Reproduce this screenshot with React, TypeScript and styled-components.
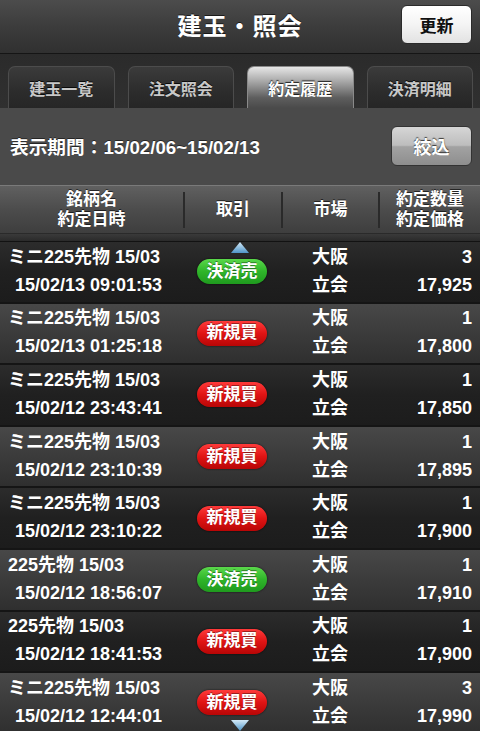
import React from 'react';
import styled, { createGlobalStyle, css } from 'styled-components';

const GlobalStyle = createGlobalStyle`
  html, body {
    margin: 0;
    padding: 0;
    background: #1e1e1e;
  }
  * {
    box-sizing: border-box;
  }
`;

const FONT = `"Liberation Sans", "Noto Sans CJK JP", sans-serif`;

const Screen = styled.div`
  width: 480px;
  height: 731px;
  overflow: hidden;
  display: flex;
  flex-direction: column;
  font-family: ${FONT};
  font-weight: bold;
  color: #fff;
  background: #1e1e1e;
  position: relative;
`;

// top navigation bar
const NavBar = styled.header`
  height: 54px;
  flex: none;
  display: grid;
  grid-template-columns: 1fr auto 1fr;
  align-items: center;
  padding: 0 8px;
  background: linear-gradient(#4c4c4c, #3c3c3c 50%, #303030);
  border-bottom: 1px solid #151515;
`;

const Title = styled.h1`
  grid-column: 2;
  margin: 0;
  font-size: 24px;
  font-weight: bold;
  color: #fff;
  letter-spacing: 1px;
  text-shadow: 0 -1px 0 rgba(0, 0, 0, 0.6);
  padding-bottom: 4px;
`;

const UpdateButton = styled.button`
  justify-self: end;
  width: 71px;
  height: 39px;
  margin-bottom: 4px;
  border: 1px solid #2a2a2a;
  border-radius: 6px;
  background: linear-gradient(#ffffff, #f4f4f4 50%, #e2e2e2);
  color: #111;
  font-family: ${FONT};
  font-size: 17px;
  font-weight: bold;
  padding: 0;
`;

// tabs
const TabBar = styled.nav`
  height: 54px;
  flex: none;
  display: flex;
  align-items: flex-end;
  gap: 13px;
  padding: 0 7px 0 8px;
  background: linear-gradient(#2b2b2b, #303030);
`;

const Tab = styled.div<{ $active?: boolean }>`
  flex: 1;
  height: 42px;
  display: flex;
  align-items: center;
  justify-content: center;
  border-radius: 7px 7px 0 0;
  font-size: 16px;
  ${p =>
    p.$active
      ? css`
          background: linear-gradient(#e6e6e6, #a8a8a8 35%, #5e5e5e 75%, #4a4a4a);
          color: #fff;
          text-shadow: 0 -1px 1px rgba(0, 0, 0, 0.8);
          border: 1px solid #8a8a8a;
          border-bottom: none;
        `
      : css`
          background: linear-gradient(#3b3b3b, #2c2c2c 60%, #262626);
          color: #c8c8c8;
          border: 1px solid #4c4c4c;
          border-bottom: none;
          text-shadow: 0 -1px 0 rgba(0, 0, 0, 0.8);
        `}
`;

// filter row
const FilterBar = styled.div`
  height: 77px;
  flex: none;
  display: flex;
  align-items: center;
  justify-content: space-between;
  padding: 0 8px 0 10px;
  background: #4a4a4a;
`;

const Period = styled.div`
  font-size: 18.7px;
  color: #fff;
  text-shadow: 0 -1px 0 rgba(0, 0, 0, 0.5);
  padding-bottom: 3px;
`;

const FilterButton = styled.button`
  width: 81px;
  height: 40px;
  margin-bottom: 2px;
  border: 1px solid #333;
  border-radius: 6px;
  background: linear-gradient(#d6d6d6, #bdbdbd 48%, #a2a2a2 52%, #8e8e8e);
  color: #fff;
  font-family: ${FONT};
  font-size: 18px;
  font-weight: bold;
  text-shadow: 0 -1px 1px rgba(0, 0, 0, 0.7);
  padding: 0;
`;

// table
const COLUMNS = '183px 98px 97px 1fr';

const HeaderRow = styled.div`
  height: 49px;
  flex: none;
  display: grid;
  grid-template-columns: ${COLUMNS};
  align-items: center;
  background: linear-gradient(#606060, #4c4c4c 50%, #3e3e3e);
  border-top: 1px solid #7a7a7a;
  border-bottom: 1px solid #2a2a2a;
`;

const HeaderCell = styled.div<{ $divider?: boolean }>`
  height: 36px;
  display: flex;
  flex-direction: column;
  align-items: center;
  justify-content: center;
  font-size: 17px;
  line-height: 20px;
  color: #fff;
  text-shadow: 0 -1px 0 rgba(0, 0, 0, 0.6);
  border-left: ${p => (p.$divider ? '2px solid #2a2a2a' : 'none')};
`;

const HeaderGap = styled.div`
  height: 8px;
  flex: none;
  background: linear-gradient(#3a3a3a, #2a2a2a);
  border-bottom: 1px solid #121212;
`;

const List = styled.div`
  flex: 1;
  position: relative;
  overflow: hidden;
`;

const Row = styled.div<{ $dark: boolean }>`
  height: 61.6px;
  display: grid;
  grid-template-columns: ${COLUMNS};
  align-items: center;
  border-bottom: 2px solid #151515;
  background: ${p =>
    p.$dark
      ? 'linear-gradient(#2c2c2c, #202020 50%, #1c1c1c)'
      : 'linear-gradient(#484848, #3b3b3b 50%, #2f2f2f)'};
  font-size: 18px;
  line-height: 28px;
`;

const NameCell = styled.div`
  padding: 0 0 2px 8px;
  white-space: nowrap;
`;

const DateLine = styled.div`
  padding-left: 7px;
`;

const Center = styled.div`
  display: flex;
  justify-content: center;
`;

const Badge = styled.span<{ $kind: 'sell' | 'buy' }>`
  width: 70px;
  height: 25px;
  border-radius: 12.5px;
  display: flex;
  align-items: center;
  justify-content: center;
  font-size: 17px;
  color: #fff;
  text-shadow: 0 -1px 0 rgba(0, 0, 0, 0.4);
  background: ${p =>
    p.$kind === 'sell'
      ? 'linear-gradient(#5ad84a, #2fb52a 50%, #1f9a1e)'
      : 'linear-gradient(#ff3a3a, #e01414 50%, #b80606)'};
  box-shadow: 0 0 2px rgba(0, 0, 0, 0.8);
`;

const MarketCell = styled.div`
  padding: 0 0 2px 31px;
`;

const QtyCell = styled.div`
  padding: 0 8px 2px 0;
  text-align: right;
`;

const Arrow = styled.svg<{ $down?: boolean }>`
  position: absolute;
  left: 231px;
  width: 18px;
  height: 11px;
  ${p => (p.$down ? 'bottom: 0;' : 'top: 0;')}
`;

type Trade = {
  name: string;
  date: string;
  kind: 'sell' | 'buy';
  qty: string;
  price: string;
};

const trades: Trade[] = [
  { name: 'ミニ225先物 15/03', date: '15/02/13 09:01:53', kind: 'sell', qty: '3', price: '17,925' },
  { name: 'ミニ225先物 15/03', date: '15/02/13 01:25:18', kind: 'buy', qty: '1', price: '17,800' },
  { name: 'ミニ225先物 15/03', date: '15/02/12 23:43:41', kind: 'buy', qty: '1', price: '17,850' },
  { name: 'ミニ225先物 15/03', date: '15/02/12 23:10:39', kind: 'buy', qty: '1', price: '17,895' },
  { name: 'ミニ225先物 15/03', date: '15/02/12 23:10:22', kind: 'buy', qty: '1', price: '17,900' },
  { name: '225先物 15/03', date: '15/02/12 18:56:07', kind: 'sell', qty: '1', price: '17,910' },
  { name: '225先物 15/03', date: '15/02/12 18:41:53', kind: 'buy', qty: '1', price: '17,900' },
  { name: 'ミニ225先物 15/03', date: '15/02/12 12:44:01', kind: 'buy', qty: '3', price: '17,990' },
];

const tabs = ['建玉一覧', '注文照会', '約定履歴', '決済明細'];

const ScrollArrow: React.FC<{ down?: boolean }> = ({ down }) => (
  <Arrow $down={down} viewBox="0 0 18 11">
    <defs>
      <linearGradient id={down ? 'arrowDown' : 'arrowUp'} x1="0" y1="0" x2="0" y2="1">
        <stop offset="0" stopColor="#d4eaf8" />
        <stop offset="1" stopColor="#4f95c8" />
      </linearGradient>
    </defs>
    <polygon
      points={down ? '0,0 18,0 9,11' : '9,0 18,11 0,11'}
      fill={`url(#${down ? 'arrowDown' : 'arrowUp'})`}
    />
  </Arrow>
);

const App: React.FC = () => {
  return (
    <Screen>
      <GlobalStyle />
      <NavBar>
        <Title>建玉・照会</Title>
        <UpdateButton>更新</UpdateButton>
      </NavBar>
      <TabBar>
        {tabs.map(t => (
          <Tab key={t} $active={t === '約定履歴'}>
            {t}
          </Tab>
        ))}
      </TabBar>
      <FilterBar>
        <Period>表示期間：15/02/06~15/02/13</Period>
        <FilterButton>絞込</FilterButton>
      </FilterBar>
      <HeaderRow>
        <HeaderCell>
          <span>銘柄名</span>
          <span>約定日時</span>
        </HeaderCell>
        <HeaderCell $divider>取引</HeaderCell>
        <HeaderCell $divider>市場</HeaderCell>
        <HeaderCell $divider>
          <span>約定数量</span>
          <span>約定価格</span>
        </HeaderCell>
      </HeaderRow>
      <HeaderGap />
      <List>
        {trades.map((t, i) => (
          <Row key={i} $dark={i % 2 === 0}>
            <NameCell>
              <div>{t.name}</div>
              <DateLine>{t.date}</DateLine>
            </NameCell>
            <Center>
              <Badge $kind={t.kind}>{t.kind === 'sell' ? '決済売' : '新規買'}</Badge>
            </Center>
            <MarketCell>
              <div>大阪</div>
              <div>立会</div>
            </MarketCell>
            <QtyCell>
              <div>{t.qty}</div>
              <div>{t.price}</div>
            </QtyCell>
          </Row>
        ))}
        <ScrollArrow />
        <ScrollArrow down />
      </List>
    </Screen>
  );
};

export default App;
